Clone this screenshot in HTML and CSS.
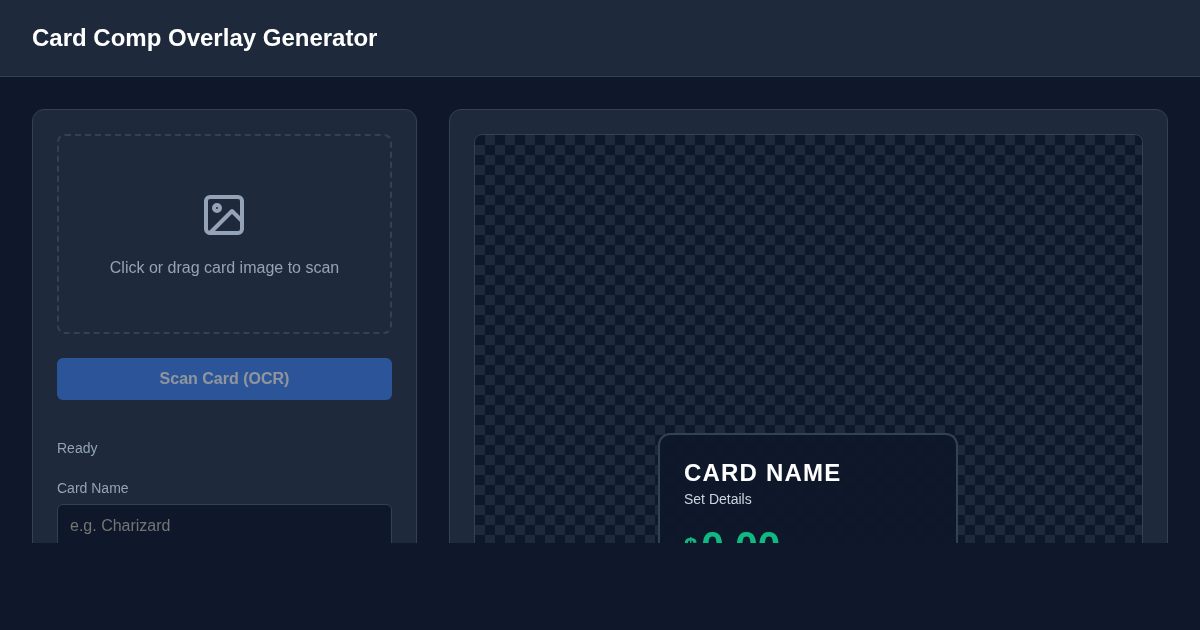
FILE: index.html
```html
<!DOCTYPE html>
<html lang="en">
<head>
<meta charset="utf-8">
<title>Card Comp Overlay Generator</title>
<link rel="stylesheet" href="styles.css">
</head>
<body>
<div class="app">
  <header class="topbar"><h1 class="title">Card Comp Overlay Generator</h1></header>
  <main class="layout">
    <section class="panel">
      <div class="dropzone">
        <svg class="drop-icon" viewBox="0 0 24 24" fill="none" stroke="currentColor" stroke-width="2" stroke-linecap="round" stroke-linejoin="round"><rect x="3" y="3" width="18" height="18" rx="2" ry="2"></rect><circle cx="8.5" cy="8.5" r="1.5"></circle><polyline points="21 15 16 10 5 21"></polyline></svg>
        <p class="drop-text">Click or drag card image to scan</p>
      </div>
      <button class="scan-btn" type="button" disabled>Scan Card (OCR)</button>
      <div class="status">Ready</div>
      <label class="field-label" for="card-name">Card Name</label>
      <input class="field-input" id="card-name" type="text" placeholder="e.g. Charizard">
    </section>
    <section class="panel">
      <div class="preview">
        <div class="overlay">
          <div class="card-name">CARD NAME</div>
          <div class="card-set">Set Details</div>
          <div class="price"><span class="currency">$</span><span class="amount">0.00</span></div>
        </div>
      </div>
    </section>
  </main>
</div>
</body>
</html>
```
FILE: styles.css
```css
* { box-sizing: border-box; }
html, body { margin: 0; height: 100%; }
body {
  background: #0f172a;
  color: #f8fafc;
  font-family: "Liberation Sans", Arial, sans-serif;
  overflow: hidden;
}
.app { height: 543px; overflow: hidden; will-change: transform; }
.topbar {
  background: #1e293b;
  border-bottom: 1px solid #334155;
  padding: 24px 32px;
}
.title { margin: 0; font-size: 24px; line-height: 28px; font-weight: 700; color: #fff; }
.layout {
  display: grid;
  grid-template-columns: 385px 1fr;
  gap: 32px;
  padding: 32px;
  align-items: start;
}
.panel {
  background: #1e293b;
  border: 1px solid #334155;
  border-radius: 12px;
  padding: 24px;
}
.dropzone {
  height: 200px;
  border: 2px dashed #334155;
  border-radius: 8px;
  display: flex;
  flex-direction: column;
  align-items: center;
  justify-content: center;
  color: #94a3b8;
}
.drop-icon { width: 48px; height: 48px; display: block; margin: 0 1px 20px 0; }
.drop-text { margin: 0; font-size: 16px; line-height: 18px; }
.scan-btn {
  display: block;
  width: 100%;
  height: 42px;
  margin-top: 24px;
  border: 0;
  border-radius: 6px;
  background: #3b82f6;
  color: #fff;
  font: 700 16px "Liberation Sans", Arial, sans-serif;
  opacity: 0.5;
}
.status { margin-top: 40px; font-size: 14px; line-height: 16px; color: #94a3b8; }
.field-label { display: block; margin-top: 24px; font-size: 14px; line-height: 16px; color: #94a3b8; }
.field-input {
  display: block;
  width: 100%;
  height: 44px;
  margin-top: 8px;
  padding: 12px;
  background: #0f172a;
  border: 1px solid #334155;
  border-radius: 6px;
  color: #fff;
  font: 16px "Liberation Sans", Arial, sans-serif;
}
.preview {
  display: flex;
  justify-content: center;
  height: 600px;
  padding-top: 298px;
  border: 1px solid #334155;
  border-radius: 8px;
  background-color: #0f172a;
  background-image: conic-gradient(#1e293b 25%, #0f172a 0 50%, #1e293b 0 75%, #0f172a 0);
  background-size: 20px 20px;
}
.overlay {
  width: 300px;
  height: 200px;
  margin-right: 1px;
  padding: 24px;
  background: rgba(15, 23, 42, 0.95);
  border: 2px solid #334155;
  border-radius: 12px;
}
.card-name { font-size: 24px; line-height: 28px; font-weight: 700; letter-spacing: 1.2px; color: #fff; }
.card-set { margin-top: 4px; font-size: 14px; line-height: 16px; color: #cbd5e1; }
.price { margin-top: 16px; display: flex; align-items: flex-start; color: #10b981; font-weight: 700; line-height: 46px; }
.currency { font-size: 24px; margin: 1px 4px 0 0; }
.amount { font-size: 40.5px; }
```
